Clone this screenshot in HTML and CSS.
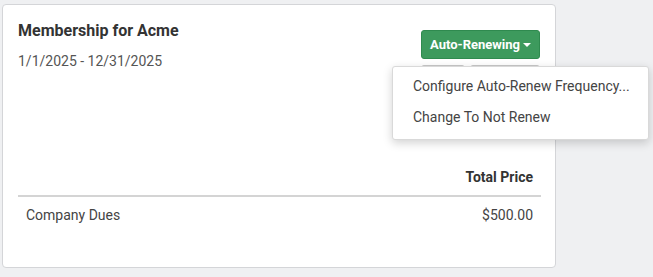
FILE: index.html
```html
<!DOCTYPE html>
<html lang="en">
<head>
    <meta charset="UTF-8">
    <meta name="viewport" content="width=device-width, initial-scale=1.0">
    <title>Membership for Acme</title>
    <link rel="stylesheet" href="styles.css">
</head>
<body>
    <div class="card">
        <div class="card-header">
            <div class="info">
                <h2>Membership for Acme</h2>
                <div class="dates">1/1/2025 - 12/31/2025</div>
            </div>
            <div class="actions">
                <div class="dropdown">
                    <button class="btn btn-green">Auto-Renewing <span class="caret"></span></button>
                    <ul class="menu">
                        <li>Configure Auto-Renew Frequency...</li>
                        <li>Change To Not Renew</li>
                    </ul>
                </div>
                <div class="btn-row">
                    <button class="btn btn-grey small" aria-label="Edit"></button>
                    <button class="btn btn-grey wide" aria-label="Remove"></button>
                </div>
            </div>
        </div>
        <table class="items">
            <thead>
                <tr>
                    <th></th>
                    <th class="right">Total Price</th>
                </tr>
            </thead>
            <tbody>
                <tr>
                    <td>Company Dues</td>
                    <td class="right">$500.00</td>
                </tr>
            </tbody>
        </table>
    </div>
</body>
</html>
```

FILE: styles.css
```css
body {
    margin: 0;
    padding: 4px 2px;
    background-color: #eff0f2;
    font-family: Roboto, "Liberation Sans", sans-serif;
    font-size: 14px;
    color: #444;
}
.card {
    width: 554px;
    height: 264px;
    background-color: #ffffff;
    border: 1px solid #d4d5d8;
    border-radius: 4px;
    padding: 0 15px;
    box-sizing: border-box;
}
.card-header {
    display: flex;
    justify-content: space-between;
    padding-top: 16px;
    height: 154px;
    box-sizing: border-box;
}
h2 {
    margin: 0;
    font-size: 16px;
    font-weight: 700;
    color: #333;
    line-height: 20px;
}
.dates {
    margin-top: 10px;
    color: #555;
    line-height: 20px;
}
.actions {
    display: flex;
    flex-direction: column;
    align-items: flex-end;
    padding-top: 9px;
    gap: 6px;
}
.dropdown {
    position: relative;
}
.btn {
    font-family: inherit;
    font-size: 13px;
    border-radius: 3px;
    cursor: pointer;
}
.btn-green {
    background-color: #3d9a5d;
    border: 1px solid #2f8a4f;
    color: #fff;
    font-weight: 700;
    height: 29px;
    width: 119px;
    padding: 0;
    display: flex;
    align-items: center;
    justify-content: center;
    gap: 3px;
}
.caret {
    display: inline-block;
    border-left: 4px solid transparent;
    border-right: 4px solid transparent;
    border-top: 4px solid #fff;
    margin-top: 1px;
}
.btn-row {
    display: flex;
    gap: 5px;
}
.btn-grey {
    background-color: #d6d6d6;
    border: 1px solid #c8c8c8;
    height: 28px;
    color: #444;
}
.small { width: 44px; }
.wide { width: 70px; }
.menu {
    position: absolute;
    top: 36px;
    right: -109px;
    width: 257px;
    margin: 0;
    padding: 4px 0 6px;
    list-style: none;
    background-color: #fff;
    border: 1px solid #d9d9d9;
    border-radius: 3px;
    box-shadow: 0 3px 10px rgba(0, 0, 0, 0.18);
    box-sizing: border-box;
    z-index: 2;
}
.menu li {
    padding: 6px 20px;
    line-height: 19px;
    color: #444;
    white-space: nowrap;
}
.items {
    width: 523px;
    border-collapse: collapse;
}
.items th,
.items td {
    padding: 8px;
    line-height: 20px;
    text-align: left;
}
.items th {
    font-weight: 700;
    color: #333;
    border-bottom: 2px solid #d4d4d4;
}
.items td {
    color: #444;
}
.right {
    text-align: right !important;
}
```
